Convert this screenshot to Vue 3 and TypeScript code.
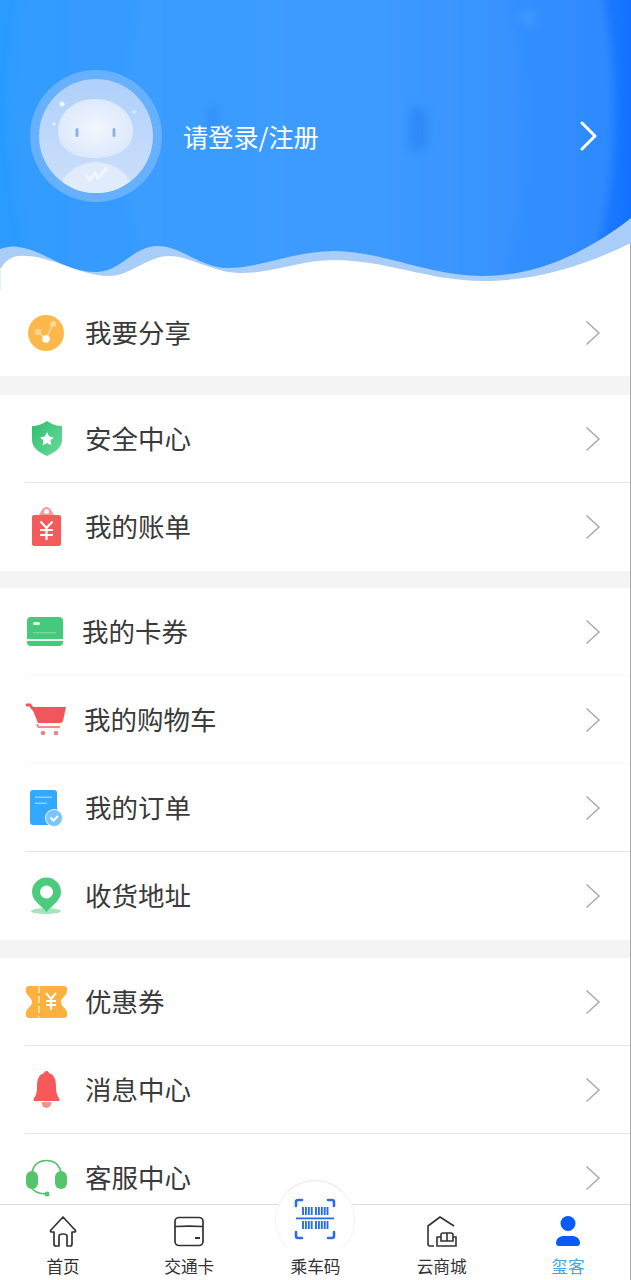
<script setup lang="ts">
type Row = { key: string; label: string; faint?: boolean; last?: boolean }

const groups: Row[][] = [
  [{ key: 'share', label: '我要分享', last: true }],
  [
    { key: 'shield', label: '安全中心' },
    { key: 'bill', label: '我的账单', last: true }
  ],
  [
    { key: 'card', label: '我的卡券', faint: true },
    { key: 'cart', label: '我的购物车', faint: true },
    { key: 'order', label: '我的订单' },
    { key: 'pin', label: '收货地址', last: true }
  ],
  [
    { key: 'ticket', label: '优惠券' },
    { key: 'bell', label: '消息中心' },
    { key: 'headset', label: '客服中心', last: true }
  ]
]

const tabs = [
  { key: 'home', label: '首页' },
  { key: 'wallet', label: '交通卡' },
  { key: 'code', label: '乘车码' },
  { key: 'mall', label: '云商城' },
  { key: 'me', label: '玺客' }
]
</script>

<template>
  <div class="page">
    <div class="scroll">
      <header class="hero">
        <svg class="hero-bg" width="631" height="290" viewBox="0 0 631 290">
          <defs>
            <linearGradient id="sky" x1="0" y1="0" x2="1" y2="0">
              <stop offset="0" stop-color="#2a9bff" />
              <stop offset="0.5" stop-color="#2a92ff" />
              <stop offset="0.9" stop-color="#2a84ff" />
              <stop offset="1" stop-color="#1272ff" />
            </linearGradient>
            <linearGradient id="dome" x1="0" y1="0" x2="1" y2="0">
              <stop offset="0" stop-color="#329cff" />
              <stop offset="0.5" stop-color="#3a9aff" />
              <stop offset="1" stop-color="#2e8aff" />
            </linearGradient>
            <linearGradient id="dome2" x1="0" y1="0" x2="1" y2="0">
              <stop offset="0" stop-color="#3a9dff" />
              <stop offset="0.6" stop-color="#3d9bff" />
              <stop offset="1" stop-color="#3791ff" />
            </linearGradient>
            <filter id="soft" x="-100%" y="-100%" width="300%" height="300%">
              <feGaussianBlur stdDeviation="5" />
            </filter>
            <filter id="edge" x="-10%" y="-10%" width="120%" height="120%">
              <feGaussianBlur stdDeviation="4" />
            </filter>
          </defs>
          <rect width="631" height="290" fill="url(#sky)" />
          <ellipse cx="312" cy="110" rx="302" ry="420" fill="url(#dome)" filter="url(#edge)" />
          <ellipse cx="325" cy="130" rx="200" ry="330" fill="url(#dome2)" filter="url(#edge)" />
          <ellipse cx="213" cy="118" rx="7" ry="14" fill="#318ff9" opacity="0.8" filter="url(#soft)" />
          <rect x="409" y="106" width="18" height="46" rx="9" fill="#2a86f6" opacity="0.8" filter="url(#soft)" />
          <path d="M528 8 L538 18 L528 28 L518 18 Z" fill="#4ba0ff" opacity="0.6" filter="url(#soft)" />
          <path
            d="M0 249 C6 247 12 246 18 247 C45 250 65 273 97 272 C122 271 132 247 157 246 C182 246 200 268 228 268 C260 268 295 251 334 251 C385 252 430 276 483 276 C540 276 590 250 631 218 V290 H0 Z"
            fill="#a9cdf9"
          />
          <path
            d="M0 270 C4 262 10 257 18 256 C50 254 78 276 109 276 C130 276 148 256 169 256 C192 256 212 273 241 273 C275 273 300 260 334 260 C385 260 430 281 483 281 C540 281 590 263 631 243 V290 H0 Z"
            fill="#fff"
          />
          <rect x="0" y="268" width="1" height="22" fill="#e6eff9" />
        </svg>

        <svg class="avatar" width="132" height="132" viewBox="30 70 132 132">
          <defs>
            <linearGradient id="glass" x1="0" y1="0" x2="0" y2="1">
              <stop offset="0" stop-color="#aed0fb" />
              <stop offset="1" stop-color="#cfe0fa" />
            </linearGradient>
            <radialGradient id="face">
              <stop offset="0" stop-color="#f3f7fe" />
              <stop offset="1" stop-color="#dde9fb" />
            </radialGradient>
            <clipPath id="ball"><circle cx="96" cy="136" r="57" /></clipPath>
          </defs>
          <circle cx="96" cy="136" r="66" fill="#66b0fd" />
          <circle cx="96" cy="136" r="57" fill="url(#glass)" />
          <g clip-path="url(#ball)">
            <ellipse cx="96" cy="198" rx="38" ry="36" fill="#e0ebfb" />
          </g>
          <path d="M95 99 C115 99 133 112 133 131 C133 150 115 158 95 158 C75 158 58 150 58 131 C58 112 75 99 95 99 Z" fill="url(#face)" />
          <rect x="75.500" y="128" width="3" height="9" rx="1.500" fill="#90b2dc" />
          <rect x="112.500" y="128" width="3" height="9" rx="1.500" fill="#90b2dc" />
          <circle cx="62" cy="104" r="2.500" fill="#eef5ff" />
          <circle cx="134" cy="112" r="2" fill="#d9e8fd" />
          <circle cx="54" cy="124" r="1.500" fill="#eef5ff" />
          <path d="M86 175 L90 180 L95 173 L98 178 L107 168" fill="none" stroke="#f2f7fe" stroke-width="3" />
        </svg>

        <span class="login">请登录/注册</span>

        <svg class="hero-arrow" width="18" height="30" viewBox="0 0 18 30">
          <path d="M2 2 L15 15 L2 28" fill="none" stroke="#fff" stroke-width="3" stroke-linecap="round" stroke-linejoin="round" />
        </svg>
      </header>

      <section v-for="(group, i) in groups" :key="i" class="group">
        <div
          v-for="row in group"
          :key="row.key"
          class="row"
          :class="[`row-${row.key}`, { 'row-faint': row.faint, 'row-last': row.last }]"
        >
          <svg class="row-icon" width="48" height="48" viewBox="0 0 48 48">
            <template v-if="row.key === 'share'">
              <circle cx="24" cy="24" r="18" fill="#fdb84b" />
              <path d="M24 30 L31 15 M24 30 L16 23" stroke="#fde0ac" stroke-width="1.200" />
              <circle cx="16" cy="23" r="3.200" fill="#fdd491" />
              <circle cx="31" cy="15" r="3.200" fill="#fdd491" />
              <circle cx="24" cy="30" r="3.800" fill="#fff" />
            </template>
            <template v-else-if="row.key === 'shield'">
              <defs>
                <linearGradient id="shieldFill" x1="0" y1="0" x2="1" y2="1">
                  <stop offset="0" stop-color="#2fbd70" />
                  <stop offset="1" stop-color="#6bdc9a" />
                </linearGradient>
              </defs>
              <path d="M25 6 C21 9 15 11 10 11 V25 C10 33 18 38 25 41 C32 38 40 33 40 25 V11 C35 11 29 9 25 6 Z" fill="url(#shieldFill)" />
              <path d="M25 17 L27.200 21.600 L32 22.200 L28.500 25.600 L29.400 30.500 L25 28 L20.600 30.500 L21.500 25.600 L18 22.200 L22.800 21.600 Z" fill="#fff" />
            </template>
            <template v-else-if="row.key === 'bill'">
              <path d="M15 13 C19 12 19 4 24.500 4 C30 4 30 12 34 13 Z" fill="#f79b9b" />
              <circle cx="24.500" cy="8.500" r="2.500" fill="#fff" />
              <rect x="10" y="12" width="29" height="31" rx="2" fill="#f45b5b" />
              <path d="M18.500 18.500 L24.500 25 L30.500 18.500 M24.500 25 V37 M18 27 H31 M18 32 H31" fill="none" stroke="#fff" stroke-width="2.200" />
            </template>
            <template v-else-if="row.key === 'card'">
              <rect x="5" y="9" width="36" height="29" rx="4" fill="#45c97d" />
              <rect x="5" y="31" width="36" height="2" fill="#e6f8ee" />
              <rect x="11" y="14" width="7" height="3" rx="1.500" fill="#e6f8ee" />
              <rect x="11" y="24" width="23" height="1.500" fill="#72d89c" />
            </template>
            <template v-else-if="row.key === 'cart'">
              <path d="M5 9 H8 L11 13" fill="none" stroke="#f0565a" stroke-width="2.800" stroke-linecap="round" />
              <path d="M9.500 11 H44 L41 25 Q40.500 27 38 27 H16 Z" fill="#f0565a" />
              <path d="M15 28 L16.500 31 H38" fill="none" stroke="#f58c8c" stroke-width="2" />
              <circle cx="21" cy="37" r="2.200" fill="#f27e80" />
              <circle cx="34" cy="37" r="2.200" fill="#f27e80" />
            </template>
            <template v-else-if="row.key === 'order'">
              <rect x="8" y="6" width="27" height="35" rx="3" fill="#33a9fd" />
              <rect x="13" y="12.500" width="17" height="1.500" fill="#8fd0ff" />
              <rect x="13" y="18.500" width="12" height="1.500" fill="#8fd0ff" />
              <circle cx="32" cy="34" r="9" fill="#eaf6ff" />
              <circle cx="32" cy="34" r="8" fill="#7cc6fa" />
              <path d="M28.500 33.500 L31.500 36.500 L36 32" fill="none" stroke="#fff" stroke-width="2" />
            </template>
            <template v-else-if="row.key === 'pin'">
              <ellipse cx="24" cy="39" rx="15" ry="3" fill="#a4e5bd" />
              <path d="M24.500 40 C19 33 10 29 10 20 A14.500 14.500 0 0 1 39 20 C39 29 30 33 24.500 40 Z" fill="#4ccb7f" />
              <circle cx="24.500" cy="20" r="6.500" fill="#fff" />
            </template>
            <template v-else-if="row.key === 'ticket'">
              <path d="M7 8 H42 Q45 8 45 11 V13 C45 18 39 19 39 24 C39 29 45 30 45 35 V37 Q45 40 42 40 H7 Q4 40 4 37 V35 C4 30 10 29 10 24 C10 19 4 18 4 13 V11 Q4 8 7 8 Z" fill="#fdb13f" />
              <path d="M17 8 V40" stroke="#ffe9c6" stroke-width="1.500" stroke-dasharray="7 3" />
              <path d="M24 15 L29 21 L34 15 M29 21 V32 M24 23 H34 M24 27 H34" fill="none" stroke="#fff" stroke-width="2" />
            </template>
            <template v-else-if="row.key === 'bell'">
              <path d="M19.500 36 A5 6 0 0 0 29.500 36 Z" fill="#f79090" />
              <circle cx="24.500" cy="7.500" r="2.500" fill="#f7585a" />
              <path d="M24.500 7 C16 7 15 15 15 21 C15 26 14 30 12 32 Q10.500 35 13 35 H36 Q38.500 35 37 32 C35 30 34 26 34 21 C34 15 33 7 24.500 7 Z" fill="#f7585a" />
            </template>
            <template v-else-if="row.key === 'headset'">
              <path d="M10 18 C12 10 18 6.500 24.500 6.500 C31 6.500 37 10 39 18" fill="none" stroke="#54c46d" stroke-width="1.500" />
              <path d="M9 32 C11 38 17 40 25 40" fill="none" stroke="#54c46d" stroke-width="1.500" />
              <rect x="4" y="17" width="12" height="18" rx="6" fill="#54c46d" />
              <rect x="33" y="17" width="12" height="18" rx="6" fill="#54c46d" />
              <circle cx="25" cy="40" r="2.500" fill="#54c46d" />
            </template>
          </svg>
          <span class="row-label">{{ row.label }}</span>
          <svg class="row-arrow" width="16" height="26" viewBox="0 0 16 26">
            <path d="M1.500 1.500 L14 13 L1.500 24.500" fill="none" stroke="#aaa" stroke-width="1.500" />
          </svg>
        </div>
      </section>
    </div>

    <nav class="tabbar">
      <span class="ring"></span>
      <div v-for="tab in tabs" :key="tab.key" class="tab" :class="{ 'tab-on': tab.key === 'me' }">
        <svg v-if="tab.key === 'home'" class="tab-icon" width="36" height="36" viewBox="0 0 36 36">
          <path d="M18 4 L5.500 17.500 Q5 19 7 19 H9 V31 Q9 33 11 33 H14 V23 Q14 21 18 21 Q22 21 22 23 V33 H25 Q27 33 27 31 V19 H29 Q31 19 30.500 17.500 Z" fill="none" stroke="#333" stroke-width="1.700" stroke-linejoin="round" />
        </svg>
        <svg v-else-if="tab.key === 'wallet'" class="tab-icon" width="36" height="36" viewBox="0 0 36 36">
          <rect x="4" y="4.500" width="28" height="28" rx="4" fill="none" stroke="#333" stroke-width="1.700" />
          <path d="M4 13.500 C12 13 24 13 32 13.500" fill="none" stroke="#333" stroke-width="1.700" />
          <path d="M24 25 H29" stroke="#333" stroke-width="2" />
        </svg>
        <svg v-else-if="tab.key === 'code'" class="code-icon" width="42" height="44" viewBox="0 0 42 44">
          <path d="M2 8 V4 Q2 2 4 2 H8 M34 2 H38 Q40 2 40 4 V8 M2 34 V38 Q2 40 4 40 H8 M34 40 H38 Q40 40 40 38 V34" fill="none" stroke="#2a6fe0" stroke-width="2.600" stroke-linecap="round" />
          <rect x="2" y="19.500" width="38" height="1.800" fill="#2a6fe0" />
          <path d="M9 9 V17 M11.900 9 V17 M14.800 9 V17 M17.700 9 V17 M22 9 V17 M24.900 9 V17 M27.800 9 V17 M30.700 9 V17 M33.500 9 V17 M9 23 V31 M11.900 23 V31 M14.800 23 V31 M17.700 23 V31 M22 23 V31 M24.900 23 V31 M27.800 23 V31 M30.700 23 V31 M33.500 23 V31" stroke="#2a6fe0" stroke-width="1.900" />
        </svg>
        <svg v-else-if="tab.key === 'mall'" class="tab-icon" width="36" height="36" viewBox="0 0 36 36">
          <path d="M10 33 H6 Q4 33 4 31 V13 L16 4 L30 13" fill="none" stroke="#333" stroke-width="1.600" stroke-linejoin="round" />
          <path d="M13 24 H17 V28 H29 V24 H32 V33 H13 Z M17 24 V22 Q17 20 19 20 H27 Q29 20 29 22 V24 M23 20 V28" fill="none" stroke="#333" stroke-width="1.600" />
        </svg>
        <svg v-else class="tab-icon" width="36" height="36" viewBox="0 0 36 36">
          <circle cx="18" cy="10.500" r="7.500" fill="#0a5bf5" />
          <path d="M9 33 Q6 33 6 30 C6 25.500 10 23 14 23 H22 C26 23 30 25.500 30 30 Q30 33 27 33 Z" fill="#0a5bf5" />
        </svg>
        <span class="tab-label">{{ tab.label }}</span>
      </div>
    </nav>
  </div>
</template>

<style scoped>
.page {
  width: 631px;
  height: 1280px;
  display: flex;
  flex-direction: column;
  overflow: hidden;
  position: relative;
  background: #fff;
  font-family: "Noto Sans CJK SC", "Noto Sans", sans-serif;
  color: #333;
}

.page::after {
  content: "";
  position: absolute;
  top: 243px;
  right: 0;
  bottom: 0;
  width: 1px;
  background: #a9a9a9;
  z-index: 5;
}

.scroll {
  flex: 1;
  min-height: 0;
  overflow: hidden;
  background: #f4f4f4;
}

.hero {
  position: relative;
  height: 290px;
  box-sizing: border-box;
  padding: 0 33px 18px 30px;
  display: flex;
  align-items: center;
}

.hero-bg {
  position: absolute;
  top: 0;
  left: 0;
}

.avatar,
.login,
.hero-arrow {
  position: relative;
}

.login {
  margin-left: 21px;
  font-size: 25.200px;
  line-height: 34px;
  color: #fff;
}

.hero-arrow {
  margin-left: auto;
}

.group {
  background: #fff;
  margin-bottom: 18px;
}

section:nth-of-type(1) {
  margin-bottom: 19px;
}

section:nth-of-type(2) {
  margin-bottom: 17px;
}

.row {
  height: 88px;
  box-sizing: border-box;
  padding: 0 30px 0 22px;
  display: flex;
  align-items: center;
  position: relative;
}

.row::after {
  content: "";
  position: absolute;
  left: 25px;
  right: 0;
  bottom: 0;
  height: 1px;
  background: #e4e4e4;
}

.row-faint::after {
  background: #f7f7f7;
}

.row-last::after {
  display: none;
}

.row-share {
  height: 86px;
}

.row-label {
  margin-left: 15px;
  margin-top: -2px;
  font-size: 26.500px;
  line-height: 36px;
  color: #3a3a3a;
}

.row-card .row-label {
  margin-left: 12px;
}

.row-cart .row-label {
  margin-left: 14px;
}

.row-arrow {
  margin-left: auto;
}

.tabbar {
  height: 76px;
  flex: none;
  box-sizing: border-box;
  border-top: 1px solid #dedede;
  background: #fff;
  display: grid;
  grid-template-columns: repeat(5, 1fr);
  position: relative;
}

.ring {
  position: absolute;
  left: 275px;
  top: -25px;
  width: 80px;
  height: 80px;
  box-sizing: border-box;
  border-radius: 50%;
  background: #fff;
  border: 1px solid #e9e9e9;
  border-bottom-color: transparent;
  border-left-color: #f3f3f3;
  border-right-color: #f3f3f3;
}

.tab {
  position: relative;
  display: flex;
  flex-direction: column;
  align-items: center;
  padding-top: 8px;
}

.tab-icon {
  display: block;
}

.code-icon {
  display: block;
  margin-top: -15px;
  margin-bottom: 7px;
}

.tab-label {
  margin-top: 6px;
  font-size: 16.700px;
  line-height: 22px;
  color: #333;
}

.tab-on .tab-label {
  color: #4ba3e0;
}
</style>

<style>
html,
body {
  margin: 0;
  background: #fff;
}
</style>
